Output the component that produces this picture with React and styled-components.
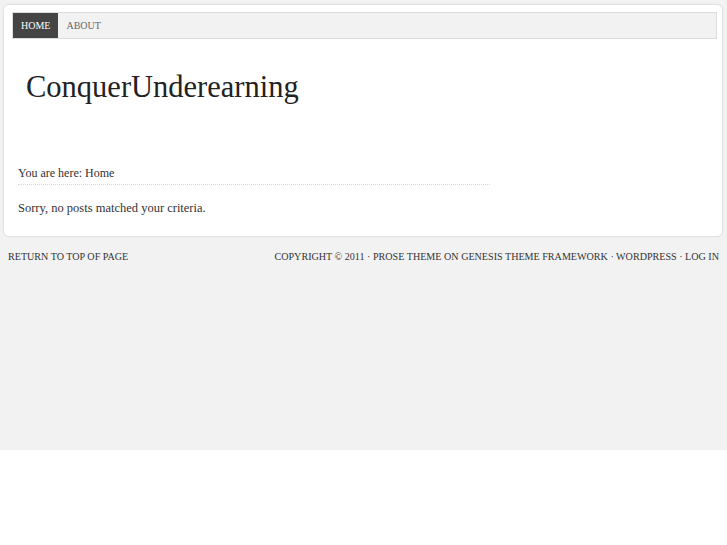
import React from "react";
import styled, { createGlobalStyle } from "styled-components";

const Global = createGlobalStyle`
  html { background: #fff; }
  body {
    margin: 0;
    font-family: "Liberation Serif", "Times New Roman", serif;
    color: #333;
  }
  * { box-sizing: border-box; }
`;

const Page = styled.div`
  background: #f2f2f2;
  height: 450px;
  padding-top: 4px;
  overflow: hidden;
`;

const Wrap = styled.div`
  width: 720px;
  margin-left: 3px;
  background: #fff;
  border: 1px solid #e4e4e4;
  border-radius: 6px;
  box-shadow: 0 0 2px rgba(0, 0, 0, 0.06);
  padding: 7px 6px 19px 8px;
`;

const Nav = styled.ul`
  list-style: none;
  margin: 0;
  padding: 0;
  display: flex;
  width: 705px;
  background: #f2f2f2;
  border: 1px solid #dddddd;
`;

const NavItem = styled.li`
  height: 25px;
  display: flex;
  align-items: center;
  padding: 0 8px;
  font-size: 10px;
  text-transform: uppercase;
  background: ${(p) => (p.$active ? "#444444" : "transparent")};
  color: ${(p) => (p.$active ? "#ffffff" : "#666666")};
`;

const Header = styled.header`
  padding: 30px 0 0 14px;
`;

const Title = styled.h1`
  margin: 0;
  font-size: 30.5px;
  line-height: 36px;
  font-weight: normal;
  color: #222;
`;

const Content = styled.main`
  width: 478px;
  padding: 60px 0 0 6px;
`;

const Breadcrumb = styled.div`
  font-size: 12px;
  line-height: 16px;
  color: #333;
  padding-bottom: 3px;
  border-bottom: 1px dotted #d8d8d8;
`;

const Message = styled.p`
  margin: 14px 0 0;
  font-size: 12.5px;
  line-height: 18px;
  color: #333;
`;

const Footer = styled.footer`
  display: flex;
  justify-content: space-between;
  padding: 0 8px;
  margin-top: 13px;
  font-size: 10.1px;
  line-height: 14px;
  text-transform: uppercase;
  color: #333;
`;

export default function App() {
  return (
    <>
      <Global />
      <Page>
        <Wrap>
          <Nav>
            <NavItem $active>Home</NavItem>
            <NavItem>About</NavItem>
          </Nav>
          <Header>
            <Title>ConquerUnderearning</Title>
          </Header>
          <Content>
            <Breadcrumb>You are here: Home</Breadcrumb>
            <Message>Sorry, no posts matched your criteria.</Message>
          </Content>
        </Wrap>
        <Footer>
          <span>Return to top of page</span>
          <span>
            Copyright © 2011 · Prose Theme on Genesis Theme Framework · WordPress · Log in
          </span>
        </Footer>
      </Page>
    </>
  );
}
